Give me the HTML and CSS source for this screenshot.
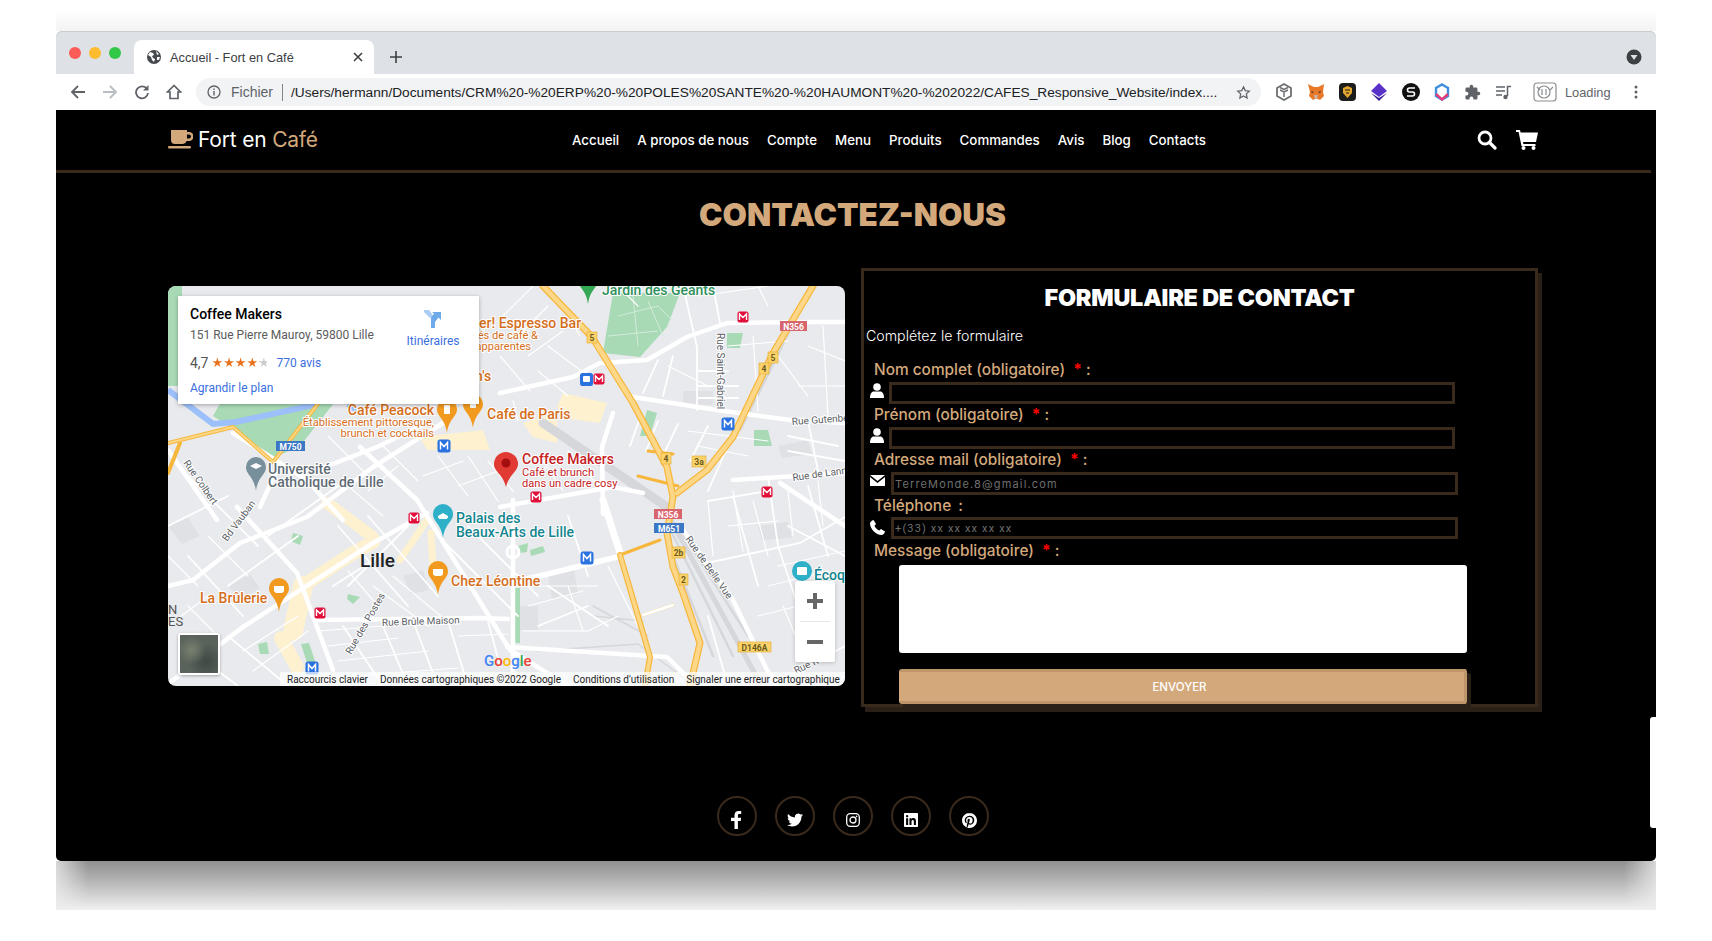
FILE: index.html
```html
<!DOCTYPE html>
<html lang="fr">

<head>
    <meta charset="utf-8">
    <title>Accueil - Fort en Café</title>
    <link rel="stylesheet" href="styles.css">
</head>

<body>
    <div class="top-fade"></div>

    <div class="window">
        <div class="tabstrip">
            <div class="lights">
                <span class="light red"></span>
                <span class="light yellow"></span>
                <span class="light green"></span>
            </div>
            <div class="tab">
                <svg class="globe" width="14" height="14" viewBox="0 0 14 14">
                    <circle cx="7" cy="7" r="7" fill="#45484c" />
                    <path d="M3 2l3 1 1 2-2 1 1 2 2 1-1 3-2-2-1-3-3-2zM9 1l3 3-2 1zM10 7l3 0-1 3-2 0z" fill="#fff" />
                </svg>
                <span class="tab-title">Accueil - Fort en Café</span>
                <svg class="tab-close" width="10" height="10" viewBox="0 0 10 10">
                    <path d="M1 1l8 8M9 1l-8 8" stroke="#3c4043" stroke-width="1.6" />
                </svg>
            </div>
            <svg class="new-tab" width="12" height="12" viewBox="0 0 12 12">
                <path d="M6 0v12M0 6h12" stroke="#3c4043" stroke-width="1.6" />
            </svg>
            <svg class="tab-menu" width="16" height="16" viewBox="0 0 16 16">
                <circle cx="8" cy="8" r="7.5" fill="#3c4043" />
                <path d="M4.5 6h7L8 11z" fill="#dee1e6" />
            </svg>
        </div>

        <div class="toolbar">
            <svg class="tool" width="16" height="16" viewBox="0 0 16 16">
                <path d="M15 8H2M8 2L2 8l6 6" fill="none" stroke="#5f6368" stroke-width="1.8" />
            </svg>
            <svg class="tool" width="16" height="16" viewBox="0 0 16 16">
                <path d="M1 8h13M8 2l6 6-6 6" fill="none" stroke="#b9bcc0" stroke-width="1.8" />
            </svg>
            <svg class="tool" width="16" height="16" viewBox="0 0 16 16">
                <path d="M13 5a6 6 0 1 0 1 4" fill="none" stroke="#5f6368" stroke-width="1.8" />
                <path d="M14.5 1v5.500H9z" fill="#5f6368" />
            </svg>
            <svg class="tool" width="16" height="16" viewBox="0 0 16 16">
                <path d="M8 1.500L1.500 8H4v6.500h8V8h2.500z" fill="none" stroke="#5f6368" stroke-width="1.7" />
            </svg>
            <div class="omnibox">
                <svg width="14" height="14" viewBox="0 0 14 14">
                    <circle cx="7" cy="7" r="6" fill="none" stroke="#5f6368" stroke-width="1.300" />
                    <path d="M7 6v4.500M7 3.500v1.500" stroke="#5f6368" stroke-width="1.400" />
                </svg>
                <span class="scheme">Fichier</span>
                <span class="omni-sep"></span>
                <span class="url">/Users/hermann/Documents/CRM%20-%20ERP%20-%20POLES%20SANTE%20-%20HAUMONT%20-%202022/CAFES_Responsive_Website/index....</span>
                <svg class="star" width="15" height="15" viewBox="0 0 24 24">
                    <path d="M12 3l2.800 6 6.500.8-4.800 4.400 1.300 6.500L12 17.400l-5.800 3.300 1.300-6.500L2.700 9.800 9.200 9z" fill="none" stroke="#5f6368" stroke-width="2" />
                </svg>
            </div>
            <div class="extensions">
                <svg width="18" height="18" viewBox="0 0 18 18">
                    <path d="M9 1l7 4v8l-7 4-7-4V5z" fill="none" stroke="#6d7073" stroke-width="1.800" />
                    <path d="M5 7l4 2 4-2M9 9v5M5 4.500l4 2 4-2" fill="none" stroke="#6d7073" stroke-width="1.500" />
                </svg>
                <svg width="18" height="18" viewBox="0 0 18 18">
                    <path d="M1 1l6 3h4l6-3-1 8 1 4-4 4-2-1H8l-2 1-4-4 1-4z" fill="#e8792b" />
                    <path d="M7 12h4l-1 4H8z" fill="#c9b8a8" />
                    <path d="M4 8l3 1-2 1zM14 8l-3 1 2 1z" fill="#3a2a1c" />
                </svg>
                <svg width="17" height="18" viewBox="0 0 17 18">
                    <rect width="17" height="18" rx="4" fill="#1d1d1b" />
                    <path d="M4 5l4.500-2L13 5v5l-4.500 5L4 10z" fill="#e3a72f" />
                    <path d="M6 7h5M7 10h3" stroke="#1d1d1b" stroke-width="1.200" />
                </svg>
                <svg width="18" height="18" viewBox="0 0 18 18">
                    <path d="M9 0l8 8-8 6-8-6z" fill="#5a32c8" />
                    <path d="M1 10l8 8 8-8-8 5z" fill="#3b1e96" />
                </svg>
                <svg width="18" height="18" viewBox="0 0 18 18">
                    <circle cx="9" cy="9" r="9" fill="#111" />
                    <path d="M13 5H7.500a2 2 0 0 0 0 4h3a2 2 0 0 1 0 4H5" fill="none" stroke="#fff" stroke-width="1.600" />
                </svg>
                <svg width="16" height="18" viewBox="0 0 16 18">
                    <path d="M8 1.500l6 3.500v8l-6 3.500L2 13V5z" fill="none" stroke="#3f8fe0" stroke-width="2.400" />
                    <path d="M2 11l6 5.500L14 11" fill="none" stroke="#e23d79" stroke-width="2.400" />
                </svg>
                <svg width="17" height="17" viewBox="0 0 24 24">
                    <path d="M20.500 11H19V7a2 2 0 0 0-2-2h-4V3.500a2.500 2.500 0 0 0-5 0V5H4a2 2 0 0 0-2 2v3.800h1.500a2.700 2.700 0 0 1 0 5.400H2V20a2 2 0 0 0 2 2h3.800v-1.500a2.700 2.700 0 0 1 5.400 0V22H17a2 2 0 0 0 2-2v-4h1.500a2.500 2.500 0 0 0 0-5z" fill="#5f6368" />
                </svg>
                <svg width="17" height="17" viewBox="0 0 17 17">
                    <path d="M1 3h9M1 7h9M1 11h6" stroke="#5f6368" stroke-width="1.500" />
                    <path d="M12.500 12V2.500H16" fill="none" stroke="#5f6368" stroke-width="1.500" />
                    <circle cx="10.500" cy="13" r="2.200" fill="#5f6368" />
                </svg>
                <svg class="ext-badge" width="24" height="20" viewBox="0 0 24 20">
                    <rect x="1" y="1" width="22" height="18" rx="3" fill="none" stroke="#8a8d90" stroke-width="1.200" />
                    <circle cx="11" cy="10" r="6" fill="none" stroke="#8a8d90" stroke-width="1.200" />
                    <path d="M9 7v6M13 7v6M4 5l3 3M20 5l-3 3" stroke="#8a8d90" stroke-width="1.200" />
                </svg>
                <span class="ext-text">Loading</span>
                <svg class="ext-dots" width="4" height="14" viewBox="0 0 4 14">
                    <circle cx="2" cy="2" r="1.500" fill="#5f6368" />
                    <circle cx="2" cy="7" r="1.500" fill="#5f6368" />
                    <circle cx="2" cy="12" r="1.500" fill="#5f6368" />
                </svg>
            </div>
        </div>

        <div class="page">
            <header class="nav">
                <a class="logo">
                    <svg width="25" height="19" viewBox="0 0 25 19">
                        <path d="M3 0h16v2h2a4 4 0 0 1 0 9h-2.400a4 4 0 0 1-3.600 3H7a4 4 0 0 1-4-4zM19 4.500v4h2a2 2 0 0 0 0-4z" fill="#d3a97c" fill-rule="evenodd" />
                        <rect x="0" y="16" width="23" height="2.500" rx="1.200" fill="#d3a97c" />
                    </svg>
                    <span>Fort en <span class="logo-accent">Café</span></span>
                </a>
                <nav class="links">
                    <a>Accueil</a>
                    <a>A propos de nous</a>
                    <a>Compte</a>
                    <a>Menu</a>
                    <a>Produits</a>
                    <a>Commandes</a>
                    <a>Avis</a>
                    <a>Blog</a>
                    <a>Contacts</a>
                </nav>
                <div class="nav-icons">
                    <svg width="20" height="20" viewBox="0 0 20 20">
                        <circle cx="8" cy="8" r="6" fill="none" stroke="#fff" stroke-width="2.800" />
                        <path d="M12.500 12.500L18 18" stroke="#fff" stroke-width="3.200" stroke-linecap="round" />
                    </svg>
                    <svg width="22" height="20" viewBox="0 0 22 20">
                        <path d="M0 0h4l.6 2.500H22l-2 9.500H7l.4 2H19.500v2H5.500L2.600 2H0z" fill="#fff" />
                        <circle cx="7.500" cy="18" r="2" fill="#fff" />
                        <circle cx="17.500" cy="18" r="2" fill="#fff" />
                    </svg>
                </div>
            </header>

            <h1 class="page-title">CONTACTEZ-NOUS</h1>

            <section class="contact">
                <div class="map">
                    <svg class="map-canvas" width="677" height="400" viewBox="0 0 677 400">
                        <defs>
                            <g id="metro-red">
                                <rect x="-5.500" y="-5.500" width="11" height="11" rx="2" fill="#e0103a" />
                                <path d="M-3.500 3v-6l3.500 3.500 3.500-3.500v6" fill="none" stroke="#fff" stroke-width="1.400" />
                            </g>
                            <g id="metro-blue">
                                <rect x="-6.500" y="-6.500" width="13" height="13" rx="2.500" fill="#2a72e0" />
                                <path d="M-3.500 3.500v-7l3.500 4 3.500-4v7" fill="none" stroke="#fff" stroke-width="1.500" />
                            </g>
                            <path id="pin" d="M0 14C-2-1-10-2-10-10a10 10 0 0 1 20 0C10-2 2-1 0 14z" />
                        </defs>

                        <rect width="677" height="400" fill="#e8eaed" />

                        <!-- ilots gris -->
                        <g fill="#dfe1e5">
                            <path d="M0 240l20-8 12 18-18 8zM60 300l22-12 10 14-20 12zM235 290l20-6 6 20-18 4zM610 160l30-6 4 14-30 4zM590 240l30-4 4 16-30 2z" />
                            <path d="M515 105h30v14h-30zM450 40l22-6 6 22-24 6zM350 320h20v24h-20zM380 290l26-6 4 24-26 6z" />
                        </g>

                        <!-- parcs et eau -->
                        <g fill="#a8dab5">
                            <path d="M0 0H14V100H0zM55 112H170L132 160 105 172 68 145 45 130z" />
                            <path d="M445 7H512L499 41 472 71 435 67z" />
                            <path d="M125 247l10 3-3 9-9-4zM180 308l12 3-7 7-6-5zM90 358l9-2 2 12-9 0zM133 358l8-1 8 24-8 2z" />
                            <path d="M344 302h8v55h-8zM479 124l10 3-7 23-10 0zM559 47h16l-3 15h-13zM586 144h14l4 16h-18z" />
                            <path d="M362 264l13-4 2 6-14 4zM350 260l10-3-1 9-7 1z" />
                        </g>
                        <g fill="none" stroke="#d3ecd9" stroke-width="1">
                            <path d="M450 30L490 20 505 35M465 10L470 60M440 50L490 45M480 15L495 50" />
                        </g>
                        <path d="M0 104L45 138 68 136 150 118M180 118l14 10" fill="none" stroke="#9cc0f9" stroke-width="6" />

                        <!-- quartiers -->
                        <g fill="none" stroke="#fdf1d0" stroke-linecap="round">
                            <path d="M159 217L205 251" stroke-width="12" />
                            <path d="M139 297L179 271 205 256" stroke-width="14" />
                            <path d="M135 300L125 345" stroke-width="20" />
                            <path d="M113 352L129 381" stroke-width="14" />
                            <path d="M232 274L259 234M263 247L265 281" stroke-width="7" />
                        </g>
                        <g fill="#fdf1d0">
                            <path d="M395 107L439 117 432 137 395 132 389 121z" />
                            <path d="M355 137L389 127 389 157 365 151z" />
                            <path d="M252 151L315 144 322 164 259 164z" />
                        </g>

                        <!-- voies ferrees -->
                        <g fill="none" stroke="#d5d7da" stroke-linecap="round">
                            <path d="M375 137L499 221" stroke-width="9" />
                            <path d="M499 227L592 397" stroke-width="5" />
                            <path d="M503 245L565 370M510 240L580 350M497 250L545 370" stroke-width="2.500" />
                            <path d="M640 6L572 143" stroke-width="4" />
                            <path d="M368 365L470 358 520 395M425 320L480 350M425 330L475 335" stroke-width="1.500" />
                        </g>

                        <!-- routes -->
                        <g fill="none" stroke="#fff" stroke-linecap="round" stroke-linejoin="round" stroke-width="4.500">
                            <path d="M25 294L72 257 139 231 205 181 275 137" />
                            <path d="M69 221L129 287 165 384" />
                            <path d="M192 161L249 214 342 364 400 400" />
                            <path d="M149 334L312 332 340 333" />
                            <path d="M75 341L205 257 259 227" />
                            <path d="M355 294L449 271" stroke-width="5.500" />
                            <path d="M435 214L452 267" stroke-width="7" />
                            <path d="M445 127L434 161 435 228" />
                            <path d="M465 111L549 124 622 134 677 137" />
                            <path d="M435 77L479 74 519 51 559 37 645 36 677 36" />
                            <path d="M332 107L405 91 432 77" />
                            <path d="M332 221L445 201 475 207" />
                            <path d="M515 244L565 314 599 384 610 400" />
                            <path d="M339 361L499 371 519 391" />
                            <path d="M345 214V387" />
                            <path d="M612 197L677 240" />
                            <path d="M149 184L209 161 259 137" />
                            <path d="M92 221L112 177" />
                            <path d="M0 164L49 234" />
                            <path d="M65 147L139 194 175 234" />
                            <path d="M0 300L25 294M0 398L75 341" />
                            <path d="M565 194L677 187" />
                        </g>
                        <circle cx="345" cy="266" r="6" fill="none" stroke="#fff" stroke-width="3" />
                        <g fill="none" stroke="#fff" stroke-linecap="round" stroke-width="1.800">
                            <path d="M515 0L529 61 529 124M545 0L552 37M490 74L475 107M505 70L495 110M529 85H560M529 100H570M529 112H570" />
                            <path d="M472 132L462 160M490 135L478 165M510 138L495 170M540 140L522 175M560 160L540 205" />
                            <path d="M539 277L632 257 677 231M600 190L610 260 640 350M640 200L660 270M565 210L590 300" />
                            <path d="M20 190L90 260M0 240L60 210M100 250L170 200M20 270L75 330M60 300L130 250" />
                            <path d="M170 240L240 320M200 230L270 310M240 240L180 300M165 300L215 268M175 340L215 400M215 340L240 400M245 335L270 400M280 335L300 400M320 335L332 380" />
                            <path d="M270 250L350 330M300 240L370 310M380 300L440 340M370 340L420 320M400 230L420 290M60 350L120 400M30 370L70 400" />
                            <path d="M620 150L670 160M620 165L677 175M640 135L650 185M540 215L600 205M620 240L677 270M540 330L560 400M640 380L677 360" />
                        </g>
                        <g fill="none" stroke="#fff" stroke-linecap="round" stroke-width="1.200">
                            <path d="M332 70L362 105M345 55L380 20M395 20L412 50M360 70L395 45M380 60L420 90M335 30L365 0" />
                            <path d="M160 150L200 190M215 160L250 195M180 200L215 230M230 180L200 205M270 170L300 210M300 170L330 215M255 190L295 175M290 200L330 185" />
                            <path d="M0 270L30 300M20 320L50 350M0 340L40 310M10 390L45 355M75 365L130 330M85 385L140 345M40 250L80 290" />
                            <path d="M150 345L215 340M160 360L230 352M170 375L260 365M185 390L290 382M205 300L260 340M225 290L275 332M180 285L210 320" />
                            <path d="M290 350L340 348M355 300H430M360 320L415 305M355 345H420M400 300L415 345M440 280L470 340M420 345L450 330" />
                            <path d="M540 215L545 270M565 205L575 265M585 215L600 270M620 205L625 250M650 195L655 240M610 280L677 265M600 300L660 285M615 320L640 380M590 330L630 320M560 240L610 235" />
                            <path d="M500 80L540 100M560 60L620 55M585 50L590 125M610 70L640 110M640 60L677 75M630 100L677 100M655 40L660 130" />
                            <path d="M520 145L600 155M530 160L580 170M470 20L450 0M532 10L600 0M600 20L590 0" />
                            <path d="M400 110L370 85M345 115L350 135M320 175L345 205M400 165L430 200M375 175L395 205" />
                        </g>

                        <!-- axes jaunes -->
                        <g fill="none" stroke-linecap="round" stroke-linejoin="round">
                            <g stroke="#f6b73c" stroke-width="7">
                                <path d="M375 0L424 51 465 117 499 181 505 211 499 247 505 281 515 307 532 357 522 400" />
                                <path d="M645 0L605 67 565 151 539 184 509 207" />
                                <path d="M452 269L475 347 482 371 477 400" stroke-width="6" />
                            </g>
                            <path d="M0 157L65 141 105 176 149 119 170 90M0 187L12 157" stroke="#f6b73c" stroke-width="4" />
                            <path d="M452 269L492 254M505 319L475 329M470 190L510 200M480 165L505 168" stroke="#f6b73c" stroke-width="3" />
                            <g stroke="#fdd788" stroke-width="4.500">
                                <path d="M375 0L424 51 465 117 499 181 505 211 499 247 505 281 515 307 532 357 522 400" />
                                <path d="M645 0L605 67 565 151 539 184 509 207" />
                                <path d="M452 269L475 347 482 371 477 400" stroke-width="3.500" />
                            </g>
                            <path d="M0 157L65 141 105 176 149 119 170 90" stroke="#fdd788" stroke-width="2" />
                            <path d="M475 329L505 319" stroke="#fff" stroke-width="3" />
                        </g>

                        <!-- symboles de transport -->
                        <use href="#metro-red" x="575" y="31" />
                        <use href="#metro-red" x="431" y="93" />
                        <use href="#metro-red" x="368" y="211" />
                        <use href="#metro-red" x="599" y="206" />
                        <use href="#metro-red" x="246" y="232" />
                        <use href="#metro-red" x="152" y="327" />
                        <use href="#metro-blue" x="276" y="160" />
                        <use href="#metro-blue" x="560" y="138" />
                        <use href="#metro-blue" x="419" y="272" />
                        <use href="#metro-blue" x="144" y="382" />
                        <rect x="412" y="87" width="13" height="13" rx="2.500" fill="#2a72e0" />
                        <rect x="415" y="90" width="7" height="6" rx="1" fill="#fff" />

                        <g class="shield-text">
                            <rect x="108" y="155" width="29" height="10" fill="#3b77c4" />
                            <text x="122.500" y="163.500" fill="#fff">M750</text>
                            <rect x="612" y="35" width="27" height="10" fill="#d8656e" />
                            <text x="625.500" y="43.500" fill="#fff">N356</text>
                            <rect x="486" y="223" width="28" height="10" fill="#d8656e" />
                            <text x="500" y="231.500" fill="#fff">N356</text>
                            <rect x="486" y="237" width="30" height="10" fill="#3b77c4" />
                            <text x="501" y="245.500" fill="#fff">M651</text>
                            <g fill="#fbd36a" stroke="#e0a92d" stroke-width=".6">
                                <rect x="600" y="66" width="10" height="11" />
                                <rect x="591" y="77" width="10" height="11" />
                                <rect x="419" y="46" width="10" height="11" />
                                <rect x="493" y="167" width="10" height="11" />
                                <rect x="524" y="170" width="14" height="11" />
                                <rect x="504" y="261" width="13" height="11" />
                                <rect x="511" y="288" width="9" height="11" />
                                <rect x="570" y="356" width="33" height="10" />
                            </g>
                            <g fill="#6b5a20">
                                <text x="605" y="75">5</text>
                                <text x="596" y="86">4</text>
                                <text x="424" y="55">5</text>
                                <text x="498" y="176">4</text>
                                <text x="531" y="179">3a</text>
                                <text x="510.500" y="270">2b</text>
                                <text x="515.500" y="297">2</text>
                                <text x="586.500" y="364.500">D146A</text>
                            </g>
                        </g>

                        <!-- noms de rues -->
                        <g class="street">
                            <text transform="translate(15 177) rotate(55)">Rue Colbert</text>
                            <text transform="translate(59 256) rotate(-53)">Bd Vauban</text>
                            <text transform="translate(549 47) rotate(90)">Rue Saint-Gabriel</text>
                            <text transform="translate(624 139) rotate(-4)">Rue Gutenberg</text>
                            <text transform="translate(625 195) rotate(-8)">Rue de Lann</text>
                            <text transform="translate(183 369) rotate(-60)">Rue des Postes</text>
                            <text transform="translate(214 340) rotate(-2)">Rue Brûle Maison</text>
                            <text transform="translate(517 253) rotate(55)">Rue de Belle Vue</text>
                            <text transform="translate(628 388) rotate(-25)">Rue R</text>
                        </g>
                        <text class="street-big" x="0" y="328">N</text>
                        <text class="street-big" x="0" y="340">ES</text>

                        <!-- lieux -->
                        <use href="#pin" x="420" y="4" fill="#34a853" />
                        <text class="poi poi-green" x="434" y="9">Jardin des Géants</text>

                        <text class="poi poi-orange" x="311" y="42">er! Espresso Bar</text>
                        <text class="poi-sub poi-orange" x="370" y="53" text-anchor="end">és de café &amp;</text>
                        <text class="poi-sub poi-orange" x="363" y="64" text-anchor="end">apparentes</text>
                        <text class="poi poi-orange" x="307" y="95">n's</text>

                        <use href="#pin" x="279" y="133" fill="#f29a1f" />
                        <rect x="276" y="119" width="6" height="9" rx="1" fill="#fff" />
                        <text class="poi poi-orange" x="266" y="129" text-anchor="end">Café Peacock</text>
                        <text class="poi-sub poi-orange" x="266" y="140" text-anchor="end">Établissement pittoresque,</text>
                        <text class="poi-sub poi-orange" x="266" y="151" text-anchor="end">brunch et cocktails</text>

                        <use href="#pin" x="305" y="128" fill="#f29a1f" />
                        <rect x="302" y="113" width="6" height="9" rx="1" fill="#fff" />
                        <text class="poi poi-orange" x="319" y="133">Café de Paris</text>

                        <use href="#pin" x="88" y="191" fill="#78909c" />
                        <path d="M82 180l6-3 6 3-6 3z" fill="#fff" />
                        <text class="poi poi-slate" x="100" y="188">Université</text>
                        <text class="poi poi-slate" x="100" y="201">Catholique de Lille</text>

                        <path d="M338 201C335 188 326 186 326 178a12 12 0 0 1 24 0C350 186 341 188 338 201z" fill="#e13a33" />
                        <circle cx="338" cy="177" r="4.500" fill="#a50e0e" />
                        <text class="poi poi-red" x="354" y="178">Coffee Makers</text>
                        <text class="poi-sub poi-red" x="354" y="190">Café et brunch</text>
                        <text class="poi-sub poi-red" x="354" y="201">dans un cadre cosy</text>

                        <use href="#pin" x="275" y="238" fill="#2eb1c8" />
                        <path d="M270 232h10v-2l-5-3-5 3zM271 233h8v-1h-8z" fill="#fff" />
                        <text class="poi poi-teal" x="288" y="237">Palais des</text>
                        <text class="poi poi-teal" x="288" y="251">Beaux-Arts de Lille</text>

                        <text class="city" x="192" y="281">Lille</text>

                        <use href="#pin" x="270" y="295" fill="#f29a1f" />
                        <path d="M265 283h10v4a3 3 0 0 1-3 3h-4a3 3 0 0 1-3-3z" fill="#fff" />
                        <text class="poi poi-orange" x="283" y="300">Chez Léontine</text>

                        <use href="#pin" x="111" y="312" fill="#f29a1f" />
                        <path d="M106 300h10v4a3 3 0 0 1-3 3h-4a3 3 0 0 1-3-3z" fill="#fff" />
                        <text class="poi poi-orange" x="32" y="317">La Brûlerie</text>

                        <circle cx="634" cy="285" r="10" fill="#2eb1c8" />
                        <rect x="629" y="281" width="10" height="8" rx="1" fill="#fff" />
                        <text class="poi poi-teal" x="646" y="294">Écoq</text>

                        <text class="google" x="316" y="380"><tspan fill="#4285f4">G</tspan><tspan fill="#ea4335">o</tspan><tspan fill="#fbbc05">o</tspan><tspan fill="#4285f4">g</tspan><tspan fill="#34a853">l</tspan><tspan fill="#ea4335">e</tspan></text>
                    </svg>

                    <div class="place-card">
                        <div class="place-info">
                            <div class="place-name">Coffee Makers</div>
                            <div class="place-address">151 Rue Pierre Mauroy, 59800 Lille</div>
                            <div class="place-rating">
                                <span class="rating-value">4,7</span>
                                <span class="rating-stars">★★★★★</span>
                                <a class="place-link">770 avis</a>
                            </div>
                            <a class="place-link">Agrandir le plan</a>
                        </div>
                        <div class="place-route">
                            <svg width="18" height="18" viewBox="0 0 18 18">
                                <path d="M0 0h5l4 5.500v2.500H6L0 2z" fill="#a9cdf4" />
                                <path d="M7 8l3-4.500L8 2h9v8l-2.500-2.500L11 12v6H7z" fill="#6ea9ea" />
                            </svg>
                            <a class="place-link">Itinéraires</a>
                        </div>
                    </div>

                    <div class="map-thumb"></div>

                    <div class="map-zoom">
                        <svg width="16" height="16" viewBox="0 0 16 16">
                            <path d="M8 0v16M0 8h16" stroke="#666" stroke-width="4" />
                        </svg>
                        <span class="zoom-sep"></span>
                        <svg width="16" height="16" viewBox="0 0 16 16">
                            <path d="M0 8h16" stroke="#666" stroke-width="4" />
                        </svg>
                    </div>

                    <div class="map-credits">
                        <span>Raccourcis clavier</span>
                        <span>Données cartographiques ©2022 Google</span>
                        <span>Conditions d'utilisation</span>
                        <span>Signaler une erreur cartographique</span>
                    </div>
                </div>

                <form class="contact-form">
                    <h2 class="form-title">FORMULAIRE DE CONTACT</h2>
                    <p class="form-intro">Complétez le formulaire</p>

                    <label class="field-label" for="nom">Nom complet (obligatoire) <b>*</b> <i>:</i></label>
                    <div class="field-row">
                        <svg class="field-icon" width="14" height="16" viewBox="0 0 14 16">
                            <circle cx="7" cy="4" r="3.800" fill="#fff" />
                            <path d="M0 15c0-5 2-6.500 4-6.500h6c2 0 4 1.500 4 6.500z" fill="#fff" />
                        </svg>
                        <input class="field-input" id="nom" type="text">
                    </div>

                    <label class="field-label" for="prenom">Prénom (obligatoire) <b>*</b> <i>:</i></label>
                    <div class="field-row">
                        <svg class="field-icon" width="14" height="16" viewBox="0 0 14 16">
                            <circle cx="7" cy="4" r="3.800" fill="#fff" />
                            <path d="M0 15c0-5 2-6.500 4-6.500h6c2 0 4 1.500 4 6.500z" fill="#fff" />
                        </svg>
                        <input class="field-input" id="prenom" type="text">
                    </div>

                    <label class="field-label" for="mail">Adresse mail (obligatoire) <b>*</b> <i>:</i></label>
                    <div class="field-row field-row-wide">
                        <svg class="field-icon icon-mail" width="15" height="11" viewBox="0 0 15 11">
                            <path d="M0 0h15L7.500 6zM0 2l7.500 6L15 2v9H0z" fill="#fff" />
                        </svg>
                        <input class="field-input" id="mail" type="email" placeholder="TerreMonde.8@gmail.com">
                    </div>

                    <label class="field-label" for="tel">Téléphone <i class="tel-colon">:</i></label>
                    <div class="field-row field-row-wide field-row-tel">
                        <svg class="field-icon icon-phone" width="15" height="15" viewBox="0 0 15 15">
                            <path d="M3.500 0L6 4 4.500 5.800c.7 2 2.700 4 4.700 4.700L11 9l4 2.500c-.5 2-2 3.500-3.500 3.500C6 15 0 9 0 3.500 0 2 1.500.5 3.500 0z" fill="#fff" />
                        </svg>
                        <input class="field-input field-input-tel" id="tel" type="tel" placeholder="+(33) xx xx xx xx xx">
                    </div>

                    <label class="field-label" for="message">Message (obligatoire) <b>*</b> <i>:</i></label>
                    <textarea class="field-message" id="message"></textarea>

                    <button class="send" type="button">ENVOYER</button>
                </form>
            </section>

            <footer class="socials">
                <a class="social">
                    <svg width="12" height="18" viewBox="0 0 12 18">
                        <path d="M3.500 18V10H0V6.800h3.500V4.300C3.500 1.500 5.200 0 7.700 0c1.200 0 2.200.1 2.500.1v2.900H8.500c-1.400 0-1.600.7-1.600 1.600v2.200h3.200L9.700 10H6.900v8z" fill="#fff" />
                    </svg>
                </a>
                <a class="social">
                    <svg width="16" height="16" viewBox="0 0 24 24">
                        <path d="M23.953 4.570a10 10 0 01-2.825.775 4.958 4.958 0 002.163-2.723c-.951.555-2.005.959-3.127 1.184a4.920 4.920 0 00-8.384 4.482C7.690 8.095 4.067 6.130 1.640 3.162a4.822 4.822 0 00-.666 2.475c0 1.710.870 3.213 2.188 4.096a4.904 4.904 0 01-2.228-.616v.060a4.923 4.923 0 003.946 4.827 4.996 4.996 0 01-2.212.085 4.936 4.936 0 004.604 3.417 9.867 9.867 0 01-6.102 2.105c-.390 0-.779-.023-1.170-.067a13.995 13.995 0 007.557 2.209c9.053 0 13.998-7.496 13.998-13.985 0-.210 0-.420-.015-.630A9.935 9.935 0 0024 4.590z" fill="#fff" />
                    </svg>
                </a>
                <a class="social">
                    <svg width="14" height="14" viewBox="0 0 14 14">
                        <rect x=".7" y=".7" width="12.600" height="12.600" rx="3.500" fill="none" stroke="#fff" stroke-width="1.300" />
                        <circle cx="7" cy="7" r="3" fill="none" stroke="#fff" stroke-width="1.300" />
                        <circle cx="10.600" cy="3.400" r=".8" fill="#fff" />
                    </svg>
                </a>
                <a class="social">
                    <svg width="14" height="14" viewBox="0 0 24 24">
                        <path d="M20.447 20.452h-3.554v-5.569c0-1.328-.027-3.037-1.852-3.037-1.853 0-2.136 1.445-2.136 2.939v5.667H9.351V9h3.414v1.561h.046c.477-.9 1.637-1.850 3.370-1.850 3.601 0 4.267 2.370 4.267 5.455v6.286zM5.337 7.433a2.062 2.062 0 01-2.063-2.065 2.064 2.064 0 112.063 2.065zm1.782 13.019H3.555V9h3.564v11.452zM22.225 0H1.771C.792 0 0 .774 0 1.729v20.542C0 23.227.792 24 1.771 24h20.451C23.200 24 24 23.227 24 22.271V1.729C24 .774 23.200 0 22.222 0h.003z" fill="#fff" />
                    </svg>
                </a>
                <a class="social">
                    <svg width="15" height="15" viewBox="0 0 24 24">
                        <path d="M12.017 0C5.396 0 .029 5.367.029 11.987c0 5.079 3.158 9.417 7.618 11.162-.105-.949-.199-2.403.041-3.439.219-.937 1.406-5.957 1.406-5.957s-.359-.720-.359-1.781c0-1.663.967-2.911 2.168-2.911 1.024 0 1.518.769 1.518 1.688 0 1.029-.653 2.567-.992 3.992-.285 1.193.6 2.165 1.775 2.165 2.128 0 3.768-2.245 3.768-5.487 0-2.861-2.063-4.869-5.008-4.869-3.410 0-5.409 2.562-5.409 5.199 0 1.033.394 2.143.889 2.741.099.120.112.225.085.345-.09.375-.293 1.199-.334 1.363-.053.225-.172.271-.401.165-1.495-.69-2.433-2.878-2.433-4.646 0-3.776 2.748-7.252 7.920-7.252 4.158 0 7.392 2.967 7.392 6.923 0 4.135-2.607 7.462-6.233 7.462-1.214 0-2.354-.629-2.758-1.379l-.749 2.848c-.269 1.045-1.004 2.352-1.498 3.146 1.123.345 2.306.535 3.550.535 6.607 0 11.985-5.365 11.985-11.987C23.970 5.390 18.592.026 11.985.026L12.017 0z" fill="#fff" />
                    </svg>
                </a>
            </footer>

            <div class="scroll-thumb"></div>
        </div>
    </div>

    <div class="bottom-shadow"></div>
</body>

</html>
```

FILE: styles.css
```css
* {
    box-sizing: border-box;
}

html,
body {
    margin: 0;
    height: 941px;
    overflow: hidden;
    background: #fff;
}

body {
    font-family: Inter, "Noto Sans", sans-serif;
    color: #fff;
}

.top-fade {
    height: 31px;
    margin: 0 56px;
    background: linear-gradient(#fff 30%, #f3f3f3);
}

.window {
    margin: 0 56px;
    height: 830px;
    display: flex;
    flex-direction: column;
}

/* barre du navigateur */
.tabstrip {
    height: 43px;
    flex: none;
    display: flex;
    align-items: flex-end;
    background: #dee1e6;
    border-radius: 6px 6px 0 0;
    box-shadow: inset 0 1px #c9cbce;
    position: relative;
}

.lights {
    display: flex;
    gap: 8px;
    align-self: flex-start;
    margin: 16px 0 0 13px;
}

.light {
    width: 12px;
    height: 12px;
    border-radius: 50%;
}

.red {
    background: #fc5b57;
}

.yellow {
    background: #fdbb2e;
}

.green {
    background: #33c748;
}

.tab {
    width: 240px;
    height: 34px;
    margin-left: 13px;
    padding: 0 11px 0 13px;
    display: flex;
    align-items: center;
    background: #fff;
    border-radius: 8px 8px 0 0;
}

.globe {
    margin-right: 9px;
}

.tab-title {
    flex: 1;
    font: 12.800px "Liberation Sans", sans-serif;
    color: #3c4043;
}

.new-tab {
    align-self: center;
    margin: 9px 0 0 16px;
}

.tab-menu {
    position: absolute;
    top: 18px;
    right: 14px;
}

.toolbar {
    height: 36px;
    flex: none;
    display: flex;
    align-items: center;
    background: #fff;
    padding-left: 14px;
}

.tool {
    margin-right: 16px;
}

.toolbar .tool:nth-child(4) {
    margin-right: 14px;
}

.omnibox {
    width: 1065px;
    height: 28px;
    display: flex;
    align-items: center;
    padding: 0 10px 0 11px;
    background: #f1f3f4;
    border-radius: 14px;
}

.scheme {
    margin-left: 10px;
    font: 14px "Liberation Sans", sans-serif;
    color: #5f6368;
}

.omni-sep {
    width: 1px;
    height: 17px;
    margin: 0 8px 0 9px;
    background: #80868b;
}

.url {
    flex: 1;
    font: 13.700px "Liberation Sans", sans-serif;
    color: #202124;
    white-space: nowrap;
}

.extensions {
    flex: 1;
    display: flex;
    align-items: center;
    gap: 14px;
    margin-left: 14px;
}

.ext-badge {
    margin-left: 7px;
}

.ext-text {
    margin-left: -6px;
    font: 12.800px "Liberation Sans", sans-serif;
    color: #5f6368;
}

.ext-dots {
    margin-left: 9px;
}

/* page */
.page {
    flex: 1;
    background: #000;
    border-radius: 0 0 5px 5px;
    position: relative;
    display: flex;
    flex-direction: column;
}

.nav {
    height: 63px;
    flex: none;
    margin-right: 5px;
    padding: 0 0 1px 112px;
    display: flex;
    align-items: center;
    border-bottom: 3px solid #3a2a1c;
}

.logo {
    width: 404px;
    flex: none;
    display: flex;
    align-items: center;
    gap: 5px;
    font-size: 21px;
    font-weight: 400;
    letter-spacing: -.2px;
}

.logo-accent {
    color: #d3a97c;
}

.links {
    display: flex;
    gap: 18px;
    font-size: 13.300px;
    font-weight: 500;
}

.nav-icons {
    display: flex;
    gap: 19px;
    margin-left: auto;
    margin-right: 113px;
}

.page-title {
    margin: 17px 0 0;
    padding-right: 7px;
    height: 50px;
    line-height: 50px;
    text-align: center;
    font-size: 31.500px;
    font-weight: 900;
    color: #d3a97c;
}

.contact {
    margin-top: 28px;
    padding-left: 112px;
    display: flex;
    align-items: flex-start;
    gap: 16px;
}

/* carte */
.map {
    width: 677px;
    height: 400px;
    margin-top: 18px;
    position: relative;
    overflow: hidden;
    border-radius: 8px;
}

.map-canvas {
    display: block;
}

.map-canvas text {
    font-family: Roboto, sans-serif;
}

.shield-text text {
    font-size: 8.500px;
    font-weight: 700;
    text-anchor: middle;
}

.street text {
    font-size: 10px;
    fill: #5b6066;
    paint-order: stroke;
    stroke: #fff;
    stroke-width: 2px;
}

.map-canvas .street-big {
    font-size: 13px;
    fill: #555;
}

.map-canvas .poi {
    font-size: 14px;
    font-weight: 500;
    paint-order: stroke;
    stroke: #fff;
    stroke-width: 2px;
}

.map-canvas .poi-sub {
    font-size: 11.100px;
    paint-order: stroke;
    stroke: #fff;
    stroke-width: 2px;
}

.poi-orange {
    fill: #d56e1b;
}

.poi-green {
    fill: #2f8f5b;
}

.poi-slate {
    fill: #5f6b75;
}

.poi-red {
    fill: #c5221f;
}

.poi-teal {
    fill: #12858f;
}

.map-canvas .city {
    font-size: 19px;
    font-weight: 500;
    fill: #202124;
}

.map-canvas .google {
    font-size: 15px;
    font-weight: 500;
}

.place-card {
    position: absolute;
    top: 10px;
    left: 10px;
    width: 301px;
    height: 108px;
    padding: 9px 12px;
    display: flex;
    justify-content: space-between;
    background: #fff;
    box-shadow: 0 1px 4px rgba(0, 0, 0, .3);
    font-family: Roboto, sans-serif;
}

.place-name {
    font-size: 14px;
    font-weight: 500;
    line-height: 18px;
    color: #000;
}

.place-address {
    margin-top: 4px;
    font-size: 12px;
    line-height: 16px;
    color: #5b5b5b;
}

.place-rating {
    margin: 11px 0 6px;
    display: flex;
    align-items: center;
    height: 17px;
}

.rating-value {
    font-size: 14px;
    color: #555;
}

.rating-stars {
    width: 55px;
    margin: 0 10px 0 3px;
    font-size: 13px;
    font-family: "DejaVu Sans", sans-serif;
    white-space: nowrap;
    overflow: hidden;
    background: linear-gradient(90deg, #e7711b 88%, #ccc 88%);
    -webkit-background-clip: text;
    background-clip: text;
    color: transparent;
}

.place-link {
    font-size: 12px;
    line-height: 16px;
    color: #3a6fe0;
}

.place-route {
    width: 52px;
    margin: 5px 8px 0 0;
    display: flex;
    flex-direction: column;
    align-items: center;
    gap: 5px;
}

.map-thumb {
    position: absolute;
    left: 10px;
    top: 347px;
    width: 42px;
    height: 42px;
    border: 2px solid #fff;
    border-radius: 2px;
    background: radial-gradient(circle at 30% 40%, #78806f, transparent 40%), radial-gradient(circle at 70% 70%, #3f4a44, transparent 50%), #59625b;
    box-shadow: 0 1px 3px rgba(0, 0, 0, .3);
}

.map-zoom {
    position: absolute;
    left: 627px;
    top: 295px;
    width: 40px;
    height: 81px;
    padding: 12px 0;
    display: flex;
    flex-direction: column;
    align-items: center;
    justify-content: space-between;
    background: #fff;
    border-radius: 2px;
    box-shadow: 0 1px 4px rgba(0, 0, 0, .2);
}

.zoom-sep {
    width: 30px;
    height: 1px;
    background: #e6e6e6;
}

.map-credits {
    position: absolute;
    left: 112px;
    right: 0;
    bottom: 0;
    height: 14px;
    padding-left: 7px;
    display: flex;
    gap: 12px;
    background: rgba(255, 255, 255, .7);
    font: 10px/15px Roboto, sans-serif;
    color: #222;
    white-space: nowrap;
}

/* formulaire */
.contact-form {
    width: 677px;
    height: 439px;
    display: flex;
    flex-direction: column;
    align-items: flex-start;
    border: 3px solid #3a2a1c;
    box-shadow: 4px 5px 0 #2b2017;
}

.form-title {
    width: 100%;
    height: 54px;
    margin: 0;
    line-height: 54px;
    text-align: center;
    font-size: 23.400px;
    font-weight: 900;
    letter-spacing: -.2px;
}

.form-intro {
    height: 22px;
    margin: 0 0 12px 2px;
    line-height: 22px;
    font-size: 14.200px;
    font-weight: 300;
}

.field-label {
    height: 20px;
    margin-left: 10px;
    line-height: 21px;
    font-size: 15.400px;
    font-weight: 500;
    color: #d3a97c;
}

.field-label b {
    margin-left: 4px;
    color: #f00;
}

.field-label i {
    font-style: normal;
    color: #d3a97c;
}

.field-label .tel-colon {
    margin-left: 3px;
}

.field-row {
    width: 100%;
    margin-top: 3px;
    height: 22px;
    padding-left: 6px;
    display: flex;
    align-items: flex-start;
}

.field-row-wide {
    height: 23px;
}

.field-row-tel {
    height: 22px;
    margin: 2px 0 1px;
}

.field-icon {
    width: 19px;
    flex: none;
    margin-top: 1px;
    padding-right: 5px;
}

.field-row-wide .field-icon {
    width: 21px;
    padding-right: 6px;
    margin-top: 3px;
}

.field-input {
    width: 566px;
    height: 100%;
    padding: 0 1px;
    background: #000;
    border: 3px solid #3a2a1c;
    outline: none;
    font: 11px Inter, sans-serif;
    letter-spacing: 1.150px;
    color: #fff;
}

.field-row-wide .field-input {
    width: 567px;
}

.field-input-tel {
    font-family: Roboto, sans-serif;
}

.field-input::placeholder {
    color: #6f6f6f;
}

.field-message {
    width: 568px;
    height: 88px;
    margin: 5px 0 0 35px;
    flex: none;
    background: #fff;
    border: none;
    border-radius: 3px;
    resize: none;
}

.send {
    width: 568px;
    height: 35px;
    margin: 16px 0 0 35px;
    flex: none;
    padding-right: 10px;
    background: #d3a97c;
    color: #fff;
    border: none;
    border-top: 3px solid #bf9669;
    border-right: 3px solid #bf9669;
    border-bottom: 3px solid #bf9669;
    border-radius: 3px;
    box-shadow: 4px 4px 0 #2b2017;
    font: 500 11.500px Inter, sans-serif;
}

.socials {
    margin-top: 89px;
    padding-left: 661px;
    display: flex;
    gap: 18px;
}

.social {
    width: 40px;
    height: 40px;
    padding-top: 8px;
    display: flex;
    align-items: center;
    justify-content: center;
    border: 2px solid #3a2a1c;
    border-radius: 50%;
}

.scroll-thumb {
    position: absolute;
    right: 0;
    top: 607px;
    width: 6px;
    height: 111px;
    background: #fff;
    border-radius: 3px 0 0 3px;
}

.bottom-shadow {
    height: 49px;
    margin: 0 56px;
    background:
        linear-gradient(90deg, rgba(238, 238, 238, .75), transparent 32px, transparent calc(100% - 32px), rgba(238, 238, 238, .75)),
        linear-gradient(#8f8f8f, #b4b4b4 40%, #dcdcdc 80%, #f1f1f1);
}
```
